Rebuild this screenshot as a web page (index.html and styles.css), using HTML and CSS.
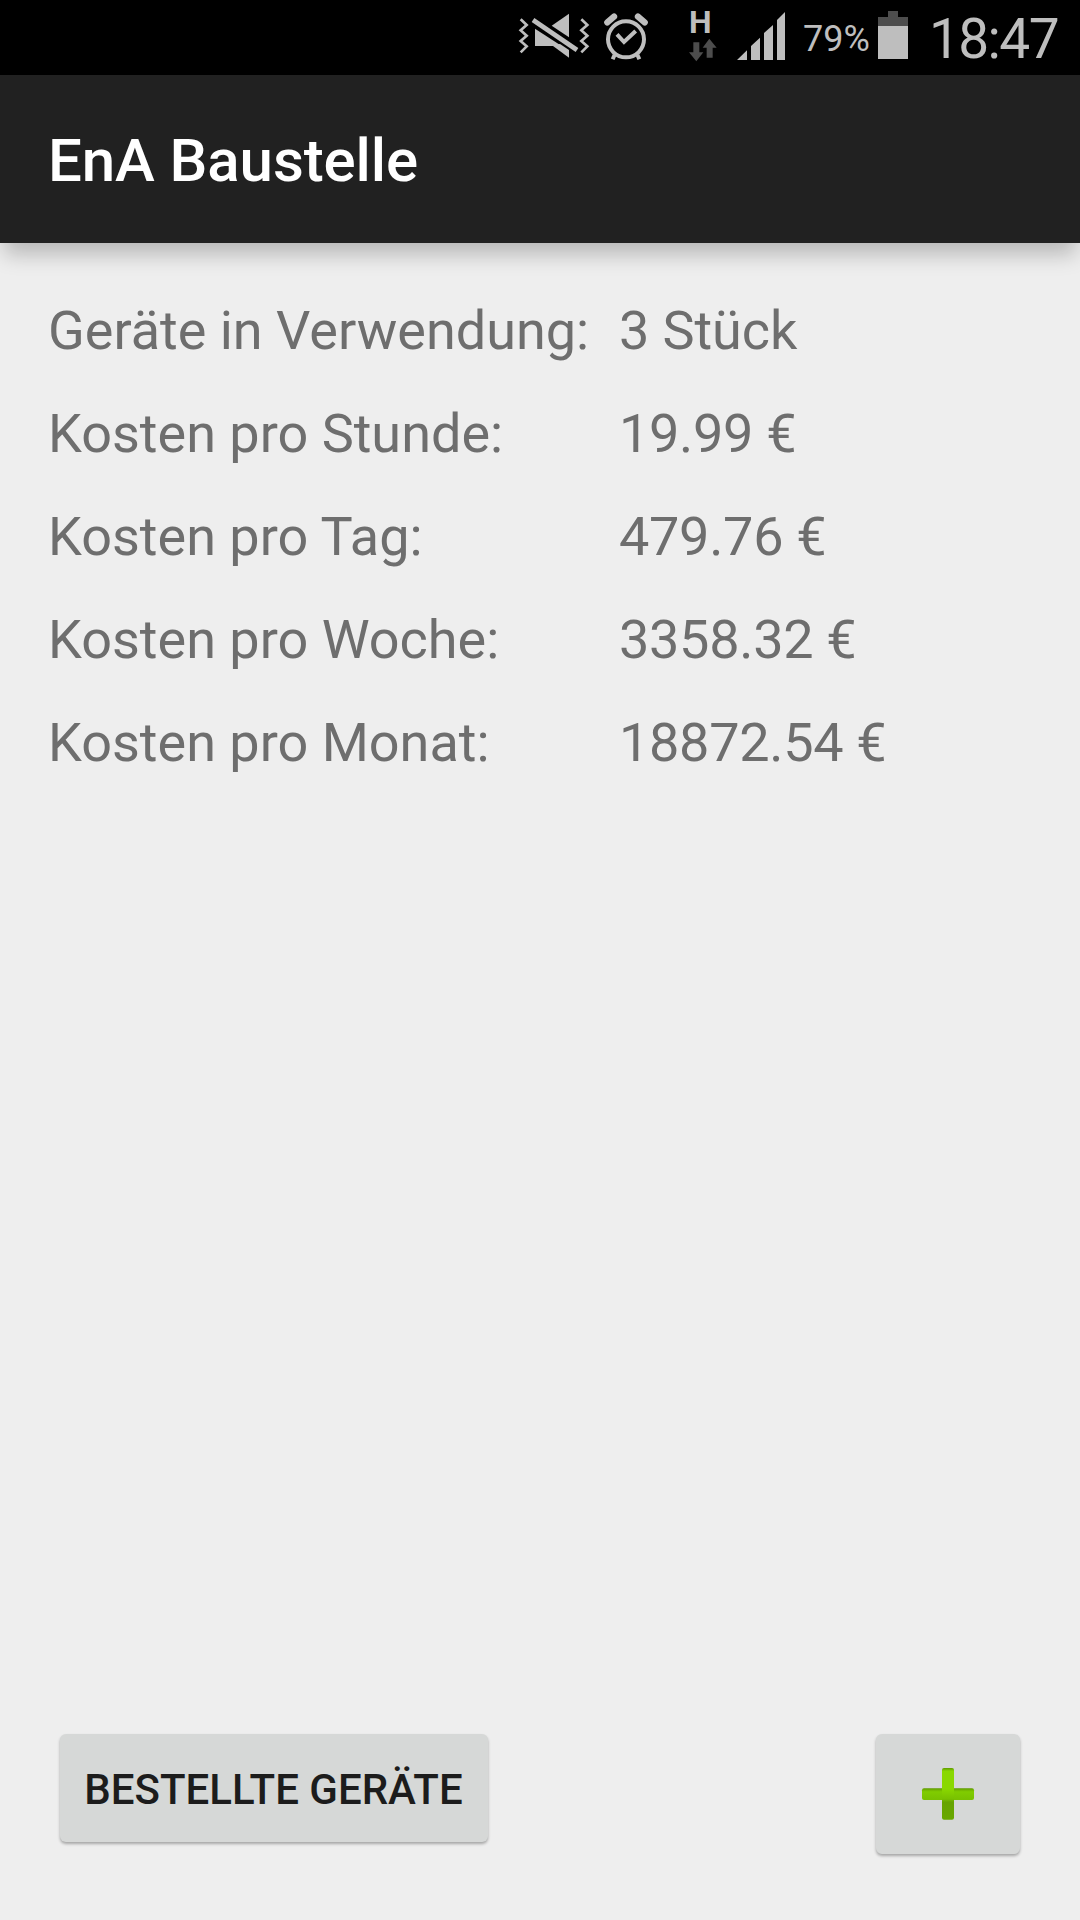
FILE: index.html
```
<!DOCTYPE html>
<html lang="de">
<head>
    <meta charset="UTF-8">
    <meta name="viewport" content="width=device-width, initial-scale=1.0">
    <title>EnA Baustelle</title>
    <link rel="stylesheet" href="styles.css">
</head>
<body>
    <!-- Status bar -->
    <div class="status-bar">
        <svg class="icon-vibrate" width="72" height="75" viewBox="0 0 216 225">
            <path class="line" d="M8 58L26 75L8 91L26 107L8 123L26 139L8 157"/>
            <path class="line" d="M190 58L208 75L190 91L208 107L190 123L208 139L190 157"/>
            <path d="M51 86L131 138H51Z"/>
            <path d="M102 136L153 173V150L126 132Z"/>
            <path d="M101 77L153 41V112Z"/>
            <path d="M49 54L181 144L173 156L41 66Z"/>
        </svg>
        <svg class="icon-alarm" width="46" height="75" viewBox="0 0 138 225">
            <circle class="ring" cx="72" cy="118" r="54"/>
            <path class="bell" d="M16 67L36 50M128 67L108 50"/>
            <path class="foot" d="M38 164L32 178M106 164L112 178"/>
            <path class="check" d="M45 103L66 126L101 93"/>
        </svg>
        <div class="network">
            <span>H</span>
            <svg width="28" height="24" viewBox="0 0 84 72">
                <path d="M13 13H31V43H43L22 70L0 43H13Z"/>
                <path d="M53 59H71V29H83L61 2L41 29H53Z"/>
            </svg>
        </div>
        <svg class="icon-signal" width="49" height="75" viewBox="0 0 147 225">
            <path d="M0 180L30 151V180ZM42 180V138L69 113V180ZM81 180V99L108 75V180ZM120 180V60L144 36V180Z"/>
        </svg>
        <span class="percent">79%</span>
        <svg class="icon-battery" width="30" height="75" viewBox="0 0 90 225">
            <path class="empty" d="M30 33H60V51H90V78H0V51H30Z"/>
            <path d="M0 78H90V177H0Z"/>
        </svg>
        <span class="time">18:47</span>
    </div>

    <header class="app-bar">
        <h1>EnA Baustelle</h1>
    </header>

    <!-- Costs -->
    <main>
        <dl class="costs">
            <dt>Geräte in Verwendung:</dt>
            <dd class="count">3 Stück</dd>
            <dt>Kosten pro Stunde:</dt>
            <dd>19.99 €</dd>
            <dt>Kosten pro Tag:</dt>
            <dd>479.76 €</dd>
            <dt>Kosten pro Woche:</dt>
            <dd>3358.32 €</dd>
            <dt>Kosten pro Monat:</dt>
            <dd>18872.54 €</dd>
        </dl>
    </main>

    <div class="actions">
        <button class="ordered">BESTELLTE GERÄTE</button>
        <button class="add" aria-label="Hinzufügen">
            <svg width="54" height="54" viewBox="0 0 162 162">
                <defs>
                    <linearGradient id="bar" x1="0" y1="0" x2="0" y2="1">
                        <stop offset="0" stop-color="#5f9a00"/>
                        <stop offset="0.16" stop-color="#74b800"/>
                        <stop offset="0.3" stop-color="#80cc00"/>
                        <stop offset="1" stop-color="#78c000"/>
                    </linearGradient>
                    <linearGradient id="post" x1="0" y1="0" x2="0" y2="1">
                        <stop offset="0" stop-color="#5f9a00"/>
                        <stop offset="0.06" stop-color="#8ad800"/>
                        <stop offset="0.4" stop-color="#8ad800"/>
                        <stop offset="0.6" stop-color="#78c000"/>
                        <stop offset="0.66" stop-color="#66a300"/>
                        <stop offset="1" stop-color="#69a800"/>
                    </linearGradient>
                </defs>
                <rect x="3" y="64" width="156" height="35" rx="6" fill="url(#bar)"/>
                <rect x="63" y="3" width="36" height="155" rx="6" fill="url(#post)"/>
            </svg>
        </button>
    </div>
</body>
</html>
```

FILE: styles.css
```
* {
    box-sizing: border-box;
}
body {
    margin: 0;
    height: 1920px;
    display: flex;
    flex-direction: column;
    background-color: #eeeeee;
    font-family: Roboto, sans-serif;
}

/* Status bar */
.status-bar {
    display: flex;
    justify-content: flex-end;
    height: 75px;
    padding-right: 21px;
    background-color: #000;
    color: #bebebe;
}
.status-bar svg {
    display: block;
    flex: none;
    fill: #bebebe;
}
.icon-vibrate .line {
    fill: none;
    stroke: #bebebe;
    stroke-width: 8;
}
.icon-alarm {
    margin-left: 12px;
}
.icon-alarm path, .icon-alarm circle {
    fill: none;
    stroke: #bebebe;
}
.icon-alarm .ring {
    stroke-width: 12;
}
.icon-alarm .bell {
    stroke-width: 19;
    stroke-linecap: round;
}
.icon-alarm .foot {
    stroke-width: 12;
}
.icon-alarm .check {
    stroke-width: 12;
}
.network {
    display: flex;
    flex-direction: column;
    width: 28px;
    margin-left: 41px;
    padding-top: 7px;
}
.network span {
    height: 31px;
    font-size: 32px;
    font-weight: bold;
    line-height: 31px;
}
.status-bar .network svg {
    fill: #4d4d4d;
}
.icon-signal {
    margin-left: 20px;
}
.percent {
    width: 64px;
    margin-left: 17px;
    font-size: 36px;
    line-height: 78px;
    white-space: nowrap;
}
.icon-battery {
    margin-left: 11px;
}
.status-bar .empty {
    fill: #4d4d4d;
}
.time {
    width: 130px;
    margin-left: 21px;
    font-size: 55px;
    letter-spacing: -1.6px;
    line-height: 79px;
    white-space: nowrap;
}

/* App bar */
.app-bar {
    display: flex;
    align-items: center;
    height: 168px;
    padding: 2px 0 0 48px;
    background-color: #212121;
    box-shadow: 0 15px 20px -4px rgba(0, 0, 0, 0.23);
}
h1 {
    margin: 0;
    color: #fff;
    font-size: 60px;
    font-weight: 500;
    letter-spacing: -0.1px;
}

/* Costs */
main {
    flex: 1;
    padding: 49px 48px 0;
}
.costs {
    display: grid;
    grid-template-columns: 571px 1fr;
    grid-auto-rows: 103px;
    margin: 0;
    color: #6e6e6e;
    font-size: 54px;
    line-height: 78px;
}
.costs dd {
    margin: 0;
    letter-spacing: -0.3px;
}
.costs .count {
    letter-spacing: -0.1px;
}

/* Buttons */
.actions {
    display: flex;
    justify-content: space-between;
    align-items: flex-start;
    padding: 0 60px 66px;
}
button {
    padding: 0;
    border: none;
    border-radius: 6px;
    background-color: #d6d8d7;
    color: #1c1c1c;
    font-family: inherit;
    box-shadow: 0 2px 3px rgba(0, 0, 0, 0.3);
}
.ordered {
    width: 428px;
    height: 108px;
    padding: 2px 1px 0 0;
    font-size: 42px;
    font-weight: 500;
}
.add {
    display: flex;
    justify-content: center;
    align-items: center;
    width: 144px;
    height: 120px;
}
```
